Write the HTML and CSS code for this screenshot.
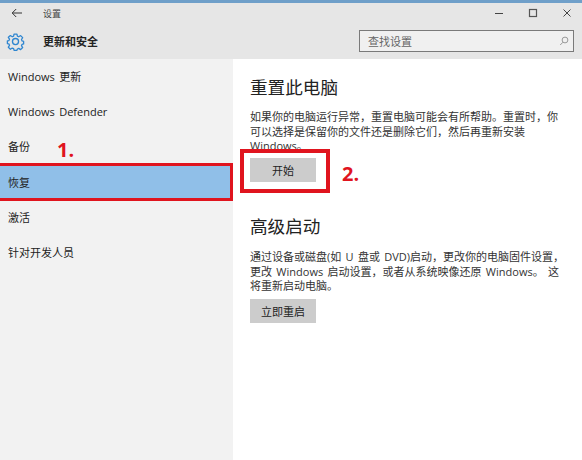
FILE: index.html
```html
<!DOCTYPE html>
<html lang="zh-CN">
<head>
<meta charset="utf-8">
<title>设置</title>
<link rel="stylesheet" href="styles.css">
</head>
<body>
<div class="window">
  <header class="top">
    <div class="titlebar">
      <svg class="back" viewBox="0 0 12 10" width="12" height="10"><path d="M11 5H1.5M5.2 1 1.2 5l4 4" fill="none" stroke="#333" stroke-width="1"/></svg>
      <span class="title">设置</span>
      <div class="controls">
        <svg viewBox="0 0 10 10" width="10" height="10"><path d="M1 5.5h8" stroke="#444" stroke-width="1"/></svg>
        <svg viewBox="0 0 10 10" width="10" height="10"><rect x="1.5" y="1.5" width="7" height="7" fill="none" stroke="#555" stroke-width="1.2"/></svg>
        <svg viewBox="0 0 10 10" width="10" height="10"><path d="M1.5 1.5l7 7M8.5 1.5l-7 7" stroke="#444" stroke-width="1"/></svg>
      </div>
    </div>
    <div class="headrow">
      <svg class="gear" viewBox="0 0 20 20" width="19" height="19">
        <path d="M8.3 1.5h3.4l.5 2.5 1.6.7 2.2-1.4 2.4 2.4-1.4 2.2.7 1.6 1.8.5v3l-1.8.5-.7 1.6 1.4 2.2-2.4 2.4-2.2-1.4-1.6.7-.5 1.5H8.3l-.5-1.9-1.6-.7-2.2 1.4-2.4-2.4 1.4-2.2-.7-1.6-1.8-.5v-3l1.8-.5.7-1.6-1.4-2.2L4 3.3l2.2 1.4 1.6-.7z" transform="translate(1 .8) scale(.9)" fill="none" stroke="#2f86d0" stroke-width="1.5" stroke-linejoin="round"/>
        <circle cx="10" cy="10" r="3.2" fill="none" stroke="#2f86d0" stroke-width="1.4"/>
      </svg>
      <h1 class="section">更新和安全</h1>
      <div class="search">
        <span>查找设置</span>
        <svg viewBox="0 0 10 10" width="10" height="10"><circle cx="6" cy="4" r="2.9" fill="none" stroke="#999" stroke-width="1"/><path d="M4 6.2 1.2 9" stroke="#999" stroke-width="1"/></svg>
      </div>
    </div>
  </header>
  <div class="main">
    <nav class="sidebar">
      <a class="item">Windows 更新</a>
      <a class="item">Windows Defender</a>
      <a class="item">备份</a>
      <a class="item active">恢复</a>
      <a class="item">激活</a>
      <a class="item">针对开发人员</a>
      <span class="mark mark-one">1.</span>
    </nav>
    <section class="content">
      <h2 class="heading">重置此电脑</h2>
      <p class="text text-first">如果你的电脑运行异常，重置电脑可能会有所帮助。重置时，你<br>可以选择是保留你的文件还是删除它们，然后再重新安装<br>Windows。</p>
      <div class="action">
        <button class="btn">开始</button>
        <span class="redbox"></span>
        <span class="mark mark-two">2.</span>
      </div>
      <h2 class="heading heading-second">高级启动</h2>
      <p class="text text-second">通过设备或磁盘(如 U 盘或 DVD)启动，更改你的电脑固件设置，<br>更改 Windows 启动设置，或者从系统映像还原 Windows。 这<br>将重新启动电脑。</p>
      <button class="btn">立即重启</button>
    </section>
  </div>
</div>
</body>
</html>
```
FILE: styles.css
```css
* { box-sizing: border-box; }
html, body { margin: 0; padding: 0; }
body {
  font-family: "Open Sans", "Noto Sans CJK SC", "Liberation Sans", sans-serif;
  font-size: 11px;
  word-spacing: 1.5px;
  color: #222;
  background: #fff;
}
.window { width: 582px; height: 460px; display: flex; flex-direction: column; overflow: hidden; }
.top { background: #e6e6e6; border-top: 3px solid #6f9fc9; height: 59px; flex: none; }
.titlebar { height: 20px; display: flex; align-items: center; padding-left: 11px; }
.back { flex: none; }
.title { margin-left: 20px; font-size: 9px; color: #444; }
.controls { margin-left: auto; display: flex; gap: 24px; padding-right: 10px; }
.headrow { height: 36px; display: flex; align-items: center; padding-left: 6px; }
.gear { flex: none; }
.section { margin: 0 0 0 18px; font-size: 11px; font-weight: 700; color: #222; }
.search {
  margin-left: auto; margin-right: 8px;
  width: 215px; height: 22px;
  border: 1px solid #7a7a7a; background: #f0f0f0;
  display: flex; align-items: center; justify-content: space-between;
  padding: 0 4px 0 8px; color: #666;
}
.main { flex: 1; display: flex; min-height: 0; }
.sidebar {
  position: relative; flex: none; width: 233px; background: #f2f2f2;
  display: flex; flex-direction: column;
}
.item { height: 35.2px; display: flex; align-items: center; padding-left: 8px; color: #222; line-height: 1; }
.active {
  height: 38px; margin: -1.4px 0; background: #90bfe8;
  border: 3px solid #e0141e; border-left: 0;
}
.mark { position: absolute; color: #e0141e; font: 700 20px/1 "Open Sans", "Liberation Sans", sans-serif; }
.mark-one { left: 57px; top: 81px; }
.content { flex: 1; padding: 16px 10px 0 17px; }
.heading { margin: 0; font-size: 17.6px; font-weight: 400; line-height: 24px; color: #222; }
.heading-second { margin-top: 29px; }
.text { margin: 0; line-height: 14.5px; color: #333; white-space: nowrap; }
.text-first { margin-top: 11px; }
.text-second { margin: 12px 0 5px; }
.action { position: relative; margin-top: 4.5px; height: 27px; }
.btn {
  display: block; width: 66px; height: 24px; padding: 0; border: 0; background: #cccccc;
  font: 11px "Noto Sans CJK SC", sans-serif; color: #222;
}
.redbox { position: absolute; left: -10px; top: -9px; width: 90px; height: 44px; border: 4px solid #e0141e; }
.mark-two { left: 92px; top: 6px; }
```
